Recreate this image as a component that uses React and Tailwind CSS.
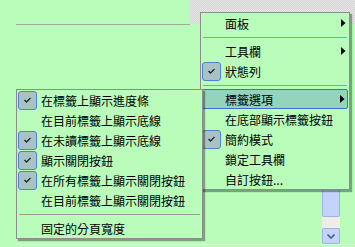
const mainItems = [
  { label: "面板", arrow: true },
  { sep: true },
  { label: "工具欄", arrow: true },
  { label: "狀態列", checked: true },
  { sep: true },
  { label: "標籤選項", arrow: true, active: true },
  { label: "在底部顯示標籤按鈕" },
  { label: "簡約模式", checked: true },
  { label: "鎖定工具欄" },
  { label: "自訂按鈕..." },
];

const tabItems = [
  { label: "在標籤上顯示進度條", checked: true },
  { label: "在目前標籤上顯示底線" },
  { label: "在未讀標籤上顯示底線", checked: true },
  { label: "顯示關閉按鈕", checked: true },
  { label: "在所有標籤上顯示關閉按鈕", checked: true },
  { label: "在目前標籤上顯示關閉按鈕" },
  { sep: true },
  { label: "固定的分頁寬度" },
];

function Check() {
  return (
    <span className="ml-px flex h-[19px] w-[19px] shrink-0 items-center justify-center rounded-[3px] border border-[#4f82d6] bg-[#a9c3c5]">
      <svg width="9" height="8" viewBox="0 0 9 8">
        <path d="M1.5 4 L3.5 6 L7.5 2" fill="none" stroke="#1d2a36" strokeWidth="1.4" />
      </svg>
    </span>
  );
}

function MenuItem({ item }) {
  if (item.sep) {
    return (
      <div className="flex h-[8px] items-center px-[2px]">
        <div className="h-px w-full bg-[#9c9c9c]" />
      </div>
    );
  }
  return (
    <div
      className={
        "flex h-[20px] items-center " +
        (item.active
          ? "mx-px rounded-[2px] border border-[#3f6fd4] bg-[#92d4bc]"
          : "")
      }
    >
      {item.checked ? <Check /> : <span className="ml-px w-[19px] shrink-0" />}
      <span
        className={
          "flex-1 pt-px text-[12px] leading-[19px] text-black " +
          (item.active ? "ml-[2px]" : "ml-[4px]")
        }
      >
        {item.label}
      </span>
      {item.arrow && (
        <svg width="5" height="8" viewBox="0 0 5 8" className={item.active ? "mr-[2px]" : "mr-[3px]"}>
          <path d="M0 0 L4.5 4 L0 8 Z" fill="#000" />
        </svg>
      )}
    </div>
  );
}

function Menu({ items, className }) {
  return (
    <div
      className={
        "absolute flex flex-col border border-[#8d8d8d] bg-[#bafcba] shadow-[2px_2px_1px_rgba(0,0,0,0.35)] " +
        className
      }
    >
      {items.map((item, i) => (
        <MenuItem key={i} item={item} />
      ))}
    </div>
  );
}

export default function App() {
  return (
    <div className="relative h-[247px] w-[355px] overflow-hidden bg-[#bafcba] font-['Noto_Sans_CJK_TC','Noto_Sans_CJK_SC',sans-serif]">
      <div className="flex h-[25px]">
        <div className="ml-[16px] w-[174px] border-b border-[#a6a6a6]" />
        <div className="h-[24px] flex-1 bg-[#dedede] bg-[image:repeating-conic-gradient(#d6d6d6_0%_25%,#e6e6e6_0%_50%)] bg-[length:2px_2px]" />
      </div>

      <div className="flex h-[222px] justify-end pr-[15px]">
        <div className="flex w-[18px] flex-col pt-[80px] pb-[3px]">
          <div className="flex-1 rounded-[2px] border border-[#9fb2e6] bg-[#c3d3fb]" />
          <div className="h-[11px] bg-[#efeee6]" />
          <div className="flex h-[16px] items-center justify-center rounded-[2px] border border-[#9fb2e6] bg-[#c3d3fb]">
            <svg width="8" height="5" viewBox="0 0 8 5">
              <path d="M0.5 0.5 L4 4 L7.5 0.5" fill="none" stroke="#4b5f86" strokeWidth="1.6" />
            </svg>
          </div>
        </div>
      </div>
      <div className="absolute bottom-[2px] left-[16px] right-0 h-px bg-[#d8fdd8]" />

      <Menu items={mainItems} className="left-[200px] top-[12px] w-[150px]" />
      <Menu items={tabItems} className="left-[16px] top-[89px] w-[187px]" />
    </div>
  );
}
